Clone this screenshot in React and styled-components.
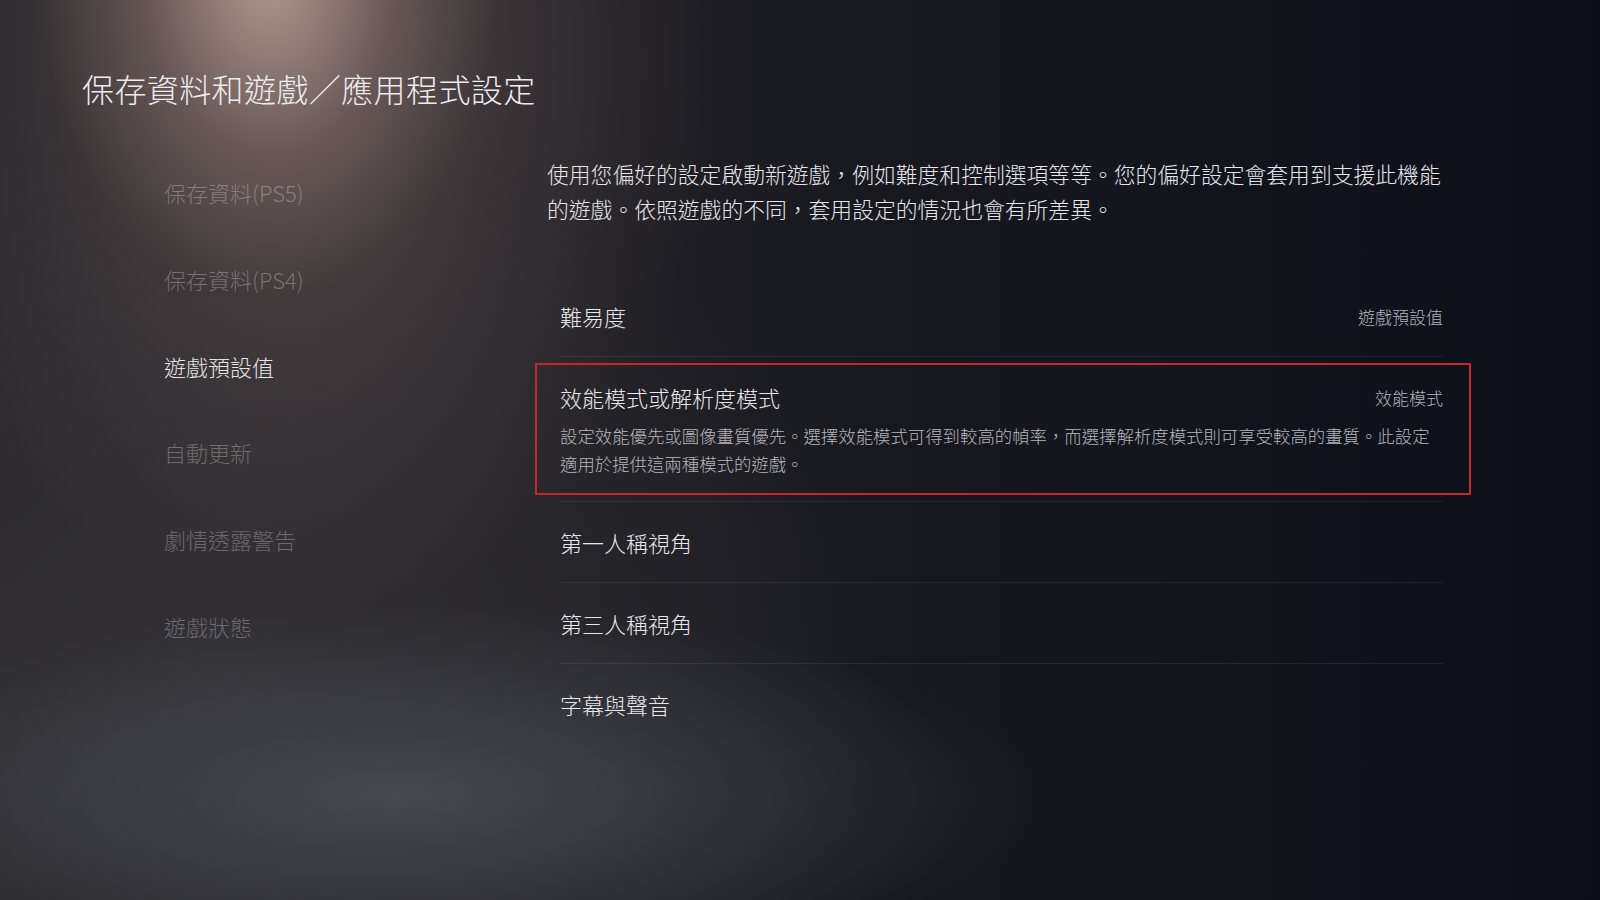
import React from "react";
import styled, { createGlobalStyle } from "styled-components";

const GlobalStyle = createGlobalStyle`
  html, body {
    margin: 0;
    padding: 0;
    background: #0d1019;
  }
  body {
    font-family: "Noto Sans CJK TC", "Noto Sans", sans-serif;
    color: #e8e8ea;
  }
`;

const Screen = styled.div`
  width: 1600px;
  height: 900px;
  overflow: hidden;
  box-sizing: border-box;
  padding: 64px 0 0 82px;
  background:
    radial-gradient(ellipse 230px 330px at 268px -30px, rgba(196, 168, 156, 0.85), rgba(160, 135, 128, 0.35) 55%, transparent 100%),
    radial-gradient(ellipse 420px 560px at 300px 60px, rgba(120, 100, 96, 0.55), transparent 100%),
    radial-gradient(ellipse 640px 190px at 400px 795px, rgba(78, 82, 90, 0.75), transparent 100%),
    radial-gradient(ellipse 700px 500px at 200px 650px, rgba(52, 50, 54, 0.8), transparent 100%),
    linear-gradient(to right, #262529 0%, #222126 30%, #18191f 55%, #0c0f19 100%);
`;

const Title = styled.h1`
  margin: 0;
  font-size: 32px;
  line-height: 48px;
  font-weight: 300;
  color: #ececee;
  letter-spacing: 0.4px;
`;

const Body = styled.div`
  display: flex;
  margin-top: 37px;
`;

const Nav = styled.ul`
  list-style: none;
  margin: 0;
  padding: 0 0 0 82px;
  width: 383px;
  flex: none;
`;

const NavItem = styled.li`
  height: 86.7px;
  display: flex;
  align-items: center;
  font-size: 22px;
  font-weight: 300;
  color: ${(p) => (p.$active ? "#e4e4e6" : "rgba(255, 255, 255, 0.28)")};
`;

const Content = styled.div`
  width: 900px;
  flex: none;
  padding-top: 7px;
`;

const Intro = styled.p`
  margin: 0;
  font-size: 21.8px;
  line-height: 35px;
  font-weight: 300;
  color: #e6e6e8;
`;

const List = styled.div`
  margin: 50px 0 0 13px;
  width: 883px;
`;

const Row = styled.div`
  position: relative;
  min-height: 81px;
  box-sizing: border-box;
  padding: ${(p) => (p.$focused ? "25px 0 23px" : "0")};
  display: flex;
  flex-direction: column;
  justify-content: center;
  border-bottom: 1px solid ${(p) => (p.$last ? "transparent" : "rgba(255, 255, 255, 0.07)")};

  ${(p) =>
    p.$focused &&
    `
    &::after {
      content: "";
      position: absolute;
      top: 6px;
      bottom: 6px;
      left: -25px;
      right: -28px;
      border: 2px solid #cc2330;
      pointer-events: none;
    }
  `}
`;

const RowHead = styled.div`
  display: flex;
  justify-content: space-between;
  align-items: center;
  height: 30px;
`;

const RowTitle = styled.span`
  font-size: 22px;
  font-weight: 300;
  color: #e8e8ea;
`;

const RowValue = styled.span`
  font-size: 17px;
  font-weight: 300;
  color: #b4b4b8;
`;

const RowDesc = styled.p`
  margin: 10px 0 0;
  font-size: 17.4px;
  line-height: 28px;
  font-weight: 300;
  color: #b6b6ba;
`;

const navItems = [
  "保存資料(PS5)",
  "保存資料(PS4)",
  "遊戲預設值",
  "自動更新",
  "劇情透露警告",
  "遊戲狀態",
];

const settings = [
  { title: "難易度", value: "遊戲預設值" },
  {
    title: "效能模式或解析度模式",
    value: "效能模式",
    desc: "設定效能優先或圖像畫質優先。選擇效能模式可得到較高的幀率，而選擇解析度模式則可享受較高的畫質。此設定適用於提供這兩種模式的遊戲。",
    focused: true,
  },
  { title: "第一人稱視角" },
  { title: "第三人稱視角" },
  { title: "字幕與聲音" },
];

export default function App() {
  return (
    <>
      <GlobalStyle />
      <Screen>
        <Title>保存資料和遊戲／應用程式設定</Title>
        <Body>
          <Nav>
            {navItems.map((item) => (
              <NavItem key={item} $active={item === "遊戲預設值"}>
                {item}
              </NavItem>
            ))}
          </Nav>
          <Content>
            <Intro>
              使用您偏好的設定啟動新遊戲，例如難度和控制選項等等。您的偏好設定會套用到支援此機能的遊戲。依照遊戲的不同，套用設定的情況也會有所差異。
            </Intro>
            <List>
              {settings.map((s, i) => (
                <Row key={s.title} $focused={s.focused} $last={i === settings.length - 1}>
                  <RowHead>
                    <RowTitle>{s.title}</RowTitle>
                    {s.value && <RowValue>{s.value}</RowValue>}
                  </RowHead>
                  {s.desc && <RowDesc>{s.desc}</RowDesc>}
                </Row>
              ))}
            </List>
          </Content>
        </Body>
      </Screen>
    </>
  );
}
